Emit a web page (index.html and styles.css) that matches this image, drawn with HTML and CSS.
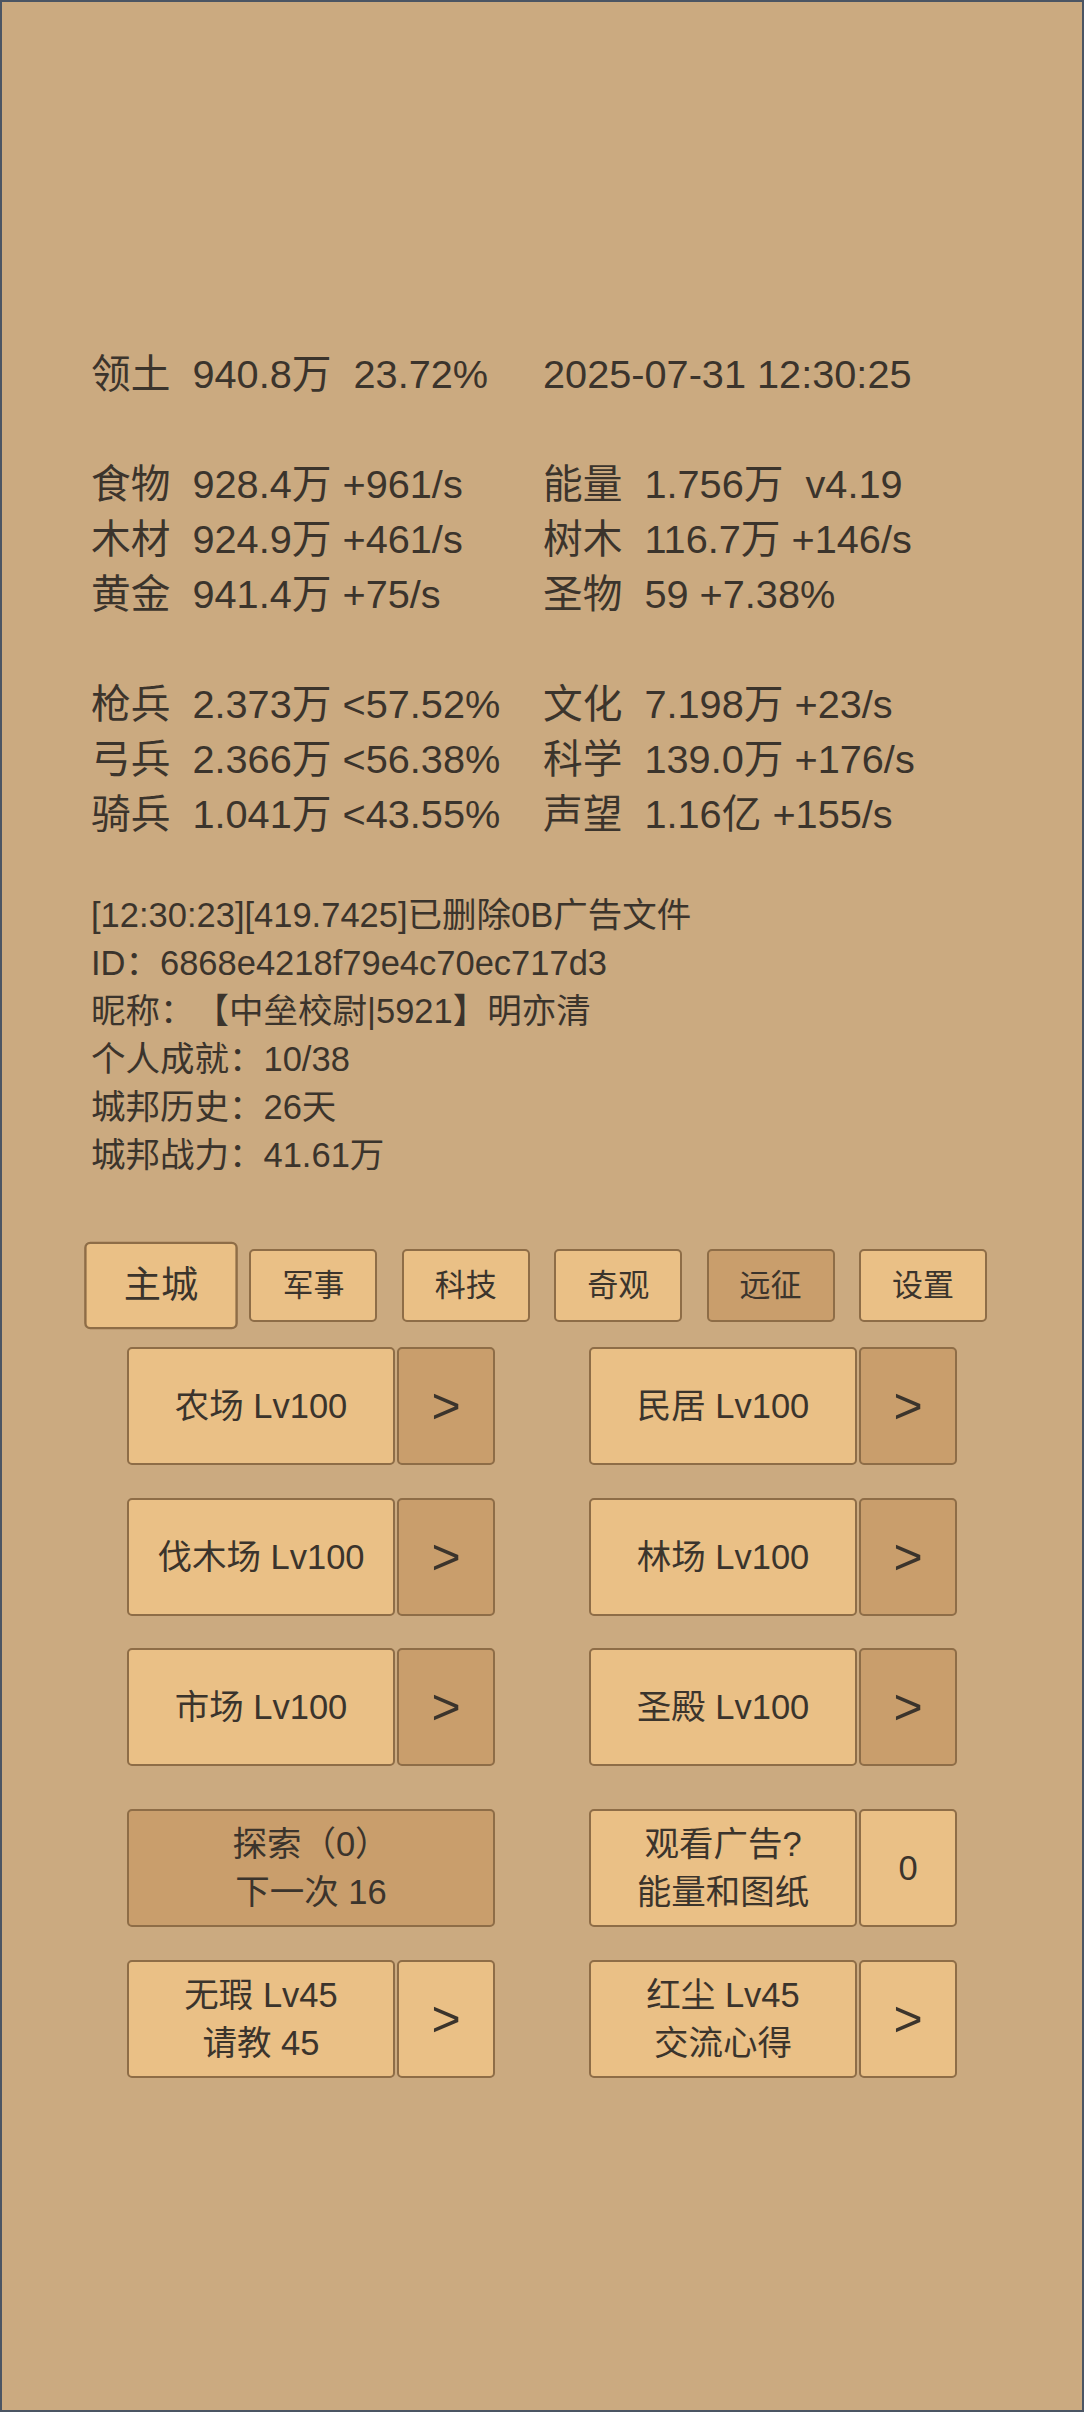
FILE: index.html
```html
<!DOCTYPE html>
<html lang="zh-CN">
<head>
<meta charset="utf-8">
<title>城邦</title>
<link rel="stylesheet" href="styles.css">
</head>
<body>
<div class="frame">
  <section class="stats">
    <div class="stat-group">
      <div class="cell">领土  940.8万  23.72%</div>
      <div class="cell">2025-07-31 12:30:25</div>
    </div>
    <div class="stat-group">
      <div class="cell">食物  928.4万 +961/s</div>
      <div class="cell">能量  1.756万  v4.19</div>
      <div class="cell">木材  924.9万 +461/s</div>
      <div class="cell">树木  116.7万 +146/s</div>
      <div class="cell">黄金  941.4万 +75/s</div>
      <div class="cell">圣物  59 +7.38%</div>
    </div>
    <div class="stat-group">
      <div class="cell">枪兵  2.373万 &lt;57.52%</div>
      <div class="cell">文化  7.198万 +23/s</div>
      <div class="cell">弓兵  2.366万 &lt;56.38%</div>
      <div class="cell">科学  139.0万 +176/s</div>
      <div class="cell">骑兵  1.041万 &lt;43.55%</div>
      <div class="cell">声望  1.16亿 +155/s</div>
    </div>
  </section>

  <section class="log">
    <div>[12:30:23][419.7425]已删除0B广告文件</div>
    <div>ID：6868e4218f79e4c70ec717d3</div>
    <div>昵称：【中垒校尉|5921】明亦清</div>
    <div>个人成就：10/38</div>
    <div>城邦历史：26天</div>
    <div>城邦战力：41.61万</div>
  </section>

  <nav class="tabs">
    <div class="tab active">主城</div>
    <div class="tab">军事</div>
    <div class="tab">科技</div>
    <div class="tab">奇观</div>
    <div class="tab dark">远征</div>
    <div class="tab">设置</div>
  </nav>

  <section class="grid buildings">
    <div class="group">
      <div class="btn main">农场 Lv100</div>
      <div class="btn side dark arrow">&gt;</div>
    </div>
    <div class="group">
      <div class="btn main">民居 Lv100</div>
      <div class="btn side dark arrow">&gt;</div>
    </div>
    <div class="group">
      <div class="btn main">伐木场 Lv100</div>
      <div class="btn side dark arrow">&gt;</div>
    </div>
    <div class="group">
      <div class="btn main">林场 Lv100</div>
      <div class="btn side dark arrow">&gt;</div>
    </div>
    <div class="group">
      <div class="btn main">市场 Lv100</div>
      <div class="btn side dark arrow">&gt;</div>
    </div>
    <div class="group">
      <div class="btn main">圣殿 Lv100</div>
      <div class="btn side dark arrow">&gt;</div>
    </div>
  </section>

  <section class="grid extras">
    <div class="group">
      <div class="btn wide dark">探索（0）<br>下一次 16</div>
    </div>
    <div class="group">
      <div class="btn main">观看广告?<br>能量和图纸</div>
      <div class="btn side">0</div>
    </div>
    <div class="group">
      <div class="btn main">无瑕 Lv45<br>请教 45</div>
      <div class="btn side arrow">&gt;</div>
    </div>
    <div class="group">
      <div class="btn main">红尘 Lv45<br>交流心得</div>
      <div class="btn side arrow">&gt;</div>
    </div>
  </section>
</div>
</body>
</html>
```

FILE: styles.css
```css
html, body {
  margin: 0;
  padding: 0;
}

body {
  background: #cbaa80;
  color: #3b342c;
  font-family: "Liberation Sans", "Noto Sans CJK SC", sans-serif;
  font-size: 34.5px;
  line-height: 1.4;
  text-spacing-trim: space-all;
}

.frame {
  box-sizing: border-box;
  width: 1084px;
  height: 2412px;
  border: 2px solid #4b5563;
  background: #cbaa80;
  padding-top: 345px;
  overflow: hidden;
}

.stats {
  padding-left: 89px;
  font-size: 39.7px;
  line-height: 55px;
}

.stat-group {
  display: grid;
  grid-template-columns: 452px auto;
  margin-bottom: 55px;
}

.stat-group:last-child {
  margin-bottom: 0;
}

.cell {
  white-space: pre;
}

.log {
  padding-left: 89px;
  margin-top: 49px;
  line-height: 48px;
  white-space: nowrap;
}

.tabs {
  display: flex;
  justify-content: center;
  gap: 24.4px;
  margin-top: 70px;
}

.tab {
  box-sizing: border-box;
  width: 128px;
  height: 73px;
  display: flex;
  align-items: center;
  justify-content: center;
  background: #eac086;
  border: 2px solid #8e6d47;
  border-radius: 5px;
  font-size: 31px;
}

.tab.dark {
  background: #c99e6c;
}

.tab.active {
  transform: scale(1.2);
}

.grid {
  display: grid;
  grid-template-columns: 462px 462px;
  justify-content: center;
  justify-items: center;
  row-gap: 32.5px;
}

.buildings {
  margin-top: 25px;
}

.extras {
  margin-top: 43px;
  row-gap: 33px;
}

.group {
  display: flex;
  gap: 2px;
  height: 118px;
}

.btn {
  box-sizing: border-box;
  height: 118px;
  display: flex;
  align-items: center;
  justify-content: center;
  text-align: center;
  background: #eac086;
  border: 2px solid #8e6d47;
  border-radius: 5px;
  line-height: 48px;
}

.btn.main {
  width: 268px;
}

.btn.side {
  width: 98px;
}

.btn.wide {
  width: 368px;
}

.btn.dark {
  background: #c99e6c;
}

.arrow {
  font-size: 50px;
}
```
